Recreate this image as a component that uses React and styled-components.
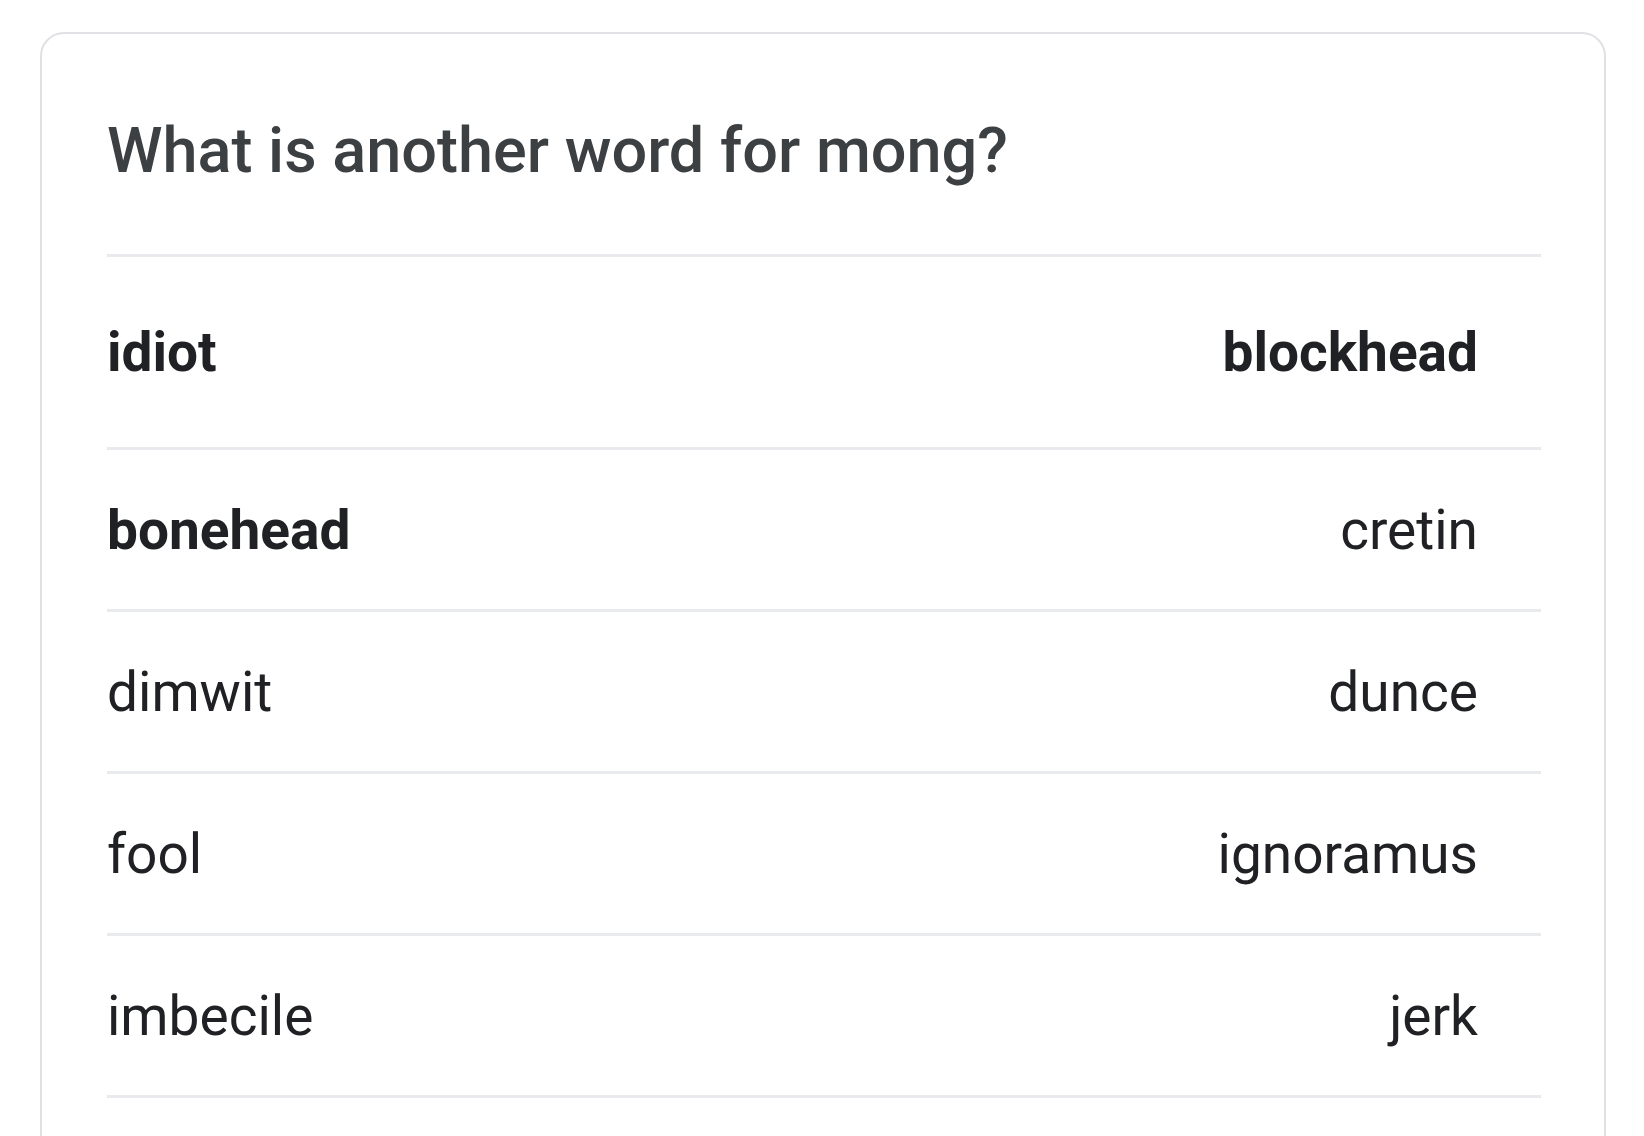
import React from "react";
import styled, { createGlobalStyle } from "styled-components";

const GlobalStyle = createGlobalStyle`
  html, body {
    margin: 0;
    padding: 0;
    background: #ffffff;
    overflow: hidden;
  }
  body {
    font-family: Roboto, "Liberation Sans", Arial, sans-serif;
  }
`;

const Page = styled.main`
  padding: 32px 38px 0 40px;
`;

const Card = styled.section`
  border: 2px solid #dfe1e5;
  border-radius: 24px;
  background: #fff;
  padding: 80px 63px 120px 65px;
`;

const Title = styled.h2`
  margin: 0 0 67px 0;
  font-family: Roboto, "Liberation Sans", Arial, sans-serif;
  font-weight: 500;
  font-size: 63px;
  line-height: normal;
  color: #3c4043;
  letter-spacing: 0;
`;

const List = styled.div`
  display: flex;
  flex-direction: column;
`;

const Row = styled.div`
  display: flex;
  justify-content: space-between;
  align-items: center;
  border-top: 3px solid #e8eaed;
  padding: ${(p) => (p.$tall ? "63px" : "47.5px")} 63px
    ${(p) => (p.$tall ? "63px" : "47.5px")} 0;
  &:last-child {
    border-bottom: 3px solid #e8eaed;
  }
`;

const Word = styled.span`
  font-family: Roboto, "Liberation Sans", Arial, sans-serif;
  font-size: 55px;
  line-height: normal;
  color: #202124;
  font-weight: ${(p) => (p.$bold ? 700 : 400)};
`;

const rows = [
  { left: "idiot", leftBold: true, right: "blockhead", rightBold: true, tall: true },
  { left: "bonehead", leftBold: true, right: "cretin" },
  { left: "dimwit", right: "dunce" },
  { left: "fool", right: "ignoramus" },
  { left: "imbecile", right: "jerk" },
];

export default function App() {
  return (
    <>
      <GlobalStyle />
      <Page>
        <Card>
          <Title>What is another word for mong?</Title>
          <List>
            {rows.map((r) => (
              <Row key={r.left} $tall={r.tall}>
                <Word $bold={r.leftBold}>{r.left}</Word>
                <Word $bold={r.rightBold}>{r.right}</Word>
              </Row>
            ))}
          </List>
        </Card>
      </Page>
    </>
  );
}
